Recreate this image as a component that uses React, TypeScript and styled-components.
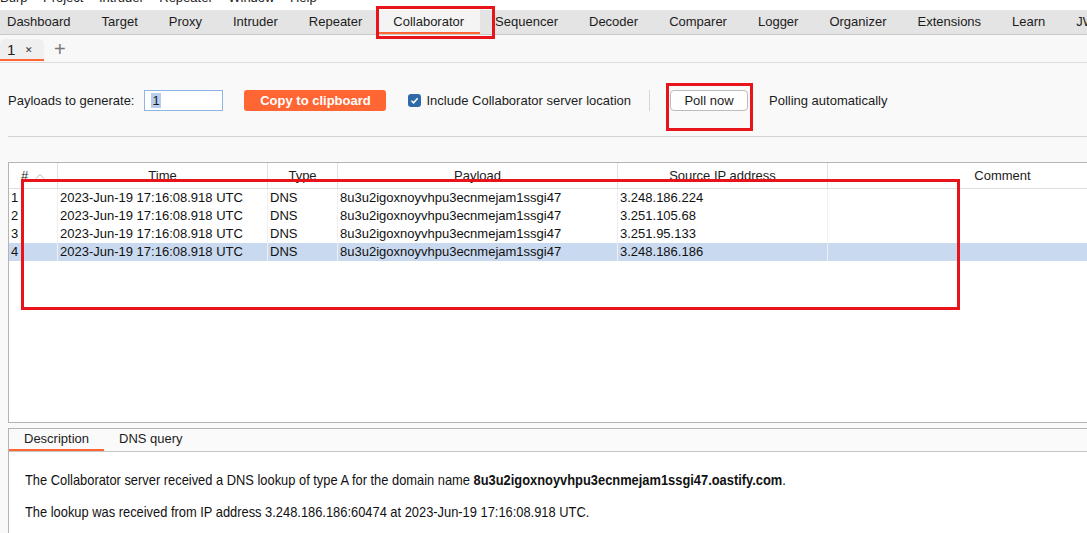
import React from 'react';
import styled, { createGlobalStyle } from 'styled-components';

const GlobalStyle = createGlobalStyle`
  html, body { margin: 0; padding: 0; }
  body {
    background: #f9f9f9;
    font-family: "Liberation Sans", Arial, sans-serif;
    font-size: 13px;
    color: #1c1c1c;
    overflow: hidden;
  }
`;

const Page = styled.div`
  position: relative;
  width: 1087px;
  height: 533px;
  overflow: hidden;
  display: flex;
  flex-direction: column;
  background: #f9f9f9;
`;

const MenuBar = styled.div`
  flex: none;
  height: 10px;
  overflow: hidden;
  background: #fff;
`;

const MenuInner = styled.div`
  display: flex;
  margin-top: -10px;
  height: 16px;
  line-height: 16px;
  color: #222;
`;

const MenuItem = styled.span`
  margin-right: 15.5px;
`;

const MainTabs = styled.div`
  flex: none;
  display: flex;
  height: 24px;
  background: #e4e4e4;
  border-bottom: 1px solid #c9c9c9;
  white-space: nowrap;
  overflow: hidden;
`;

const MainTab = styled.div<{ $active?: boolean }>`
  flex: none;
  height: 24px;
  box-sizing: border-box;
  padding: 1px 15.5px 0;
  line-height: 22px;
  color: #1c1c1c;
  background: ${p => (p.$active ? '#f4f4f4' : 'transparent')};
  border-bottom: 2px solid ${p => (p.$active ? '#ff6633' : 'transparent')};
  &:first-child { padding-left: 7px; }
`;

const SubTabs = styled.div`
  flex: none;
  display: flex;
  align-items: flex-end;
  height: 28px;
  box-sizing: border-box;
  padding-bottom: 1px;
  border-bottom: 1px solid #dcdcdc;
  background: #f8f8f8;
`;

const SubTab = styled.div`
  display: flex;
  align-items: center;
  height: 22px;
  box-sizing: border-box;
  width: 44px;
  padding-left: 7px;
  background: #efefef;
  border-radius: 5px 5px 0 0;
  border-bottom: 2px solid #ff6633;
`;

const SubTabNum = styled.span`
  font-size: 15px;
  color: #222;
`;

const SubTabClose = styled.span`
  font-size: 9px;
  margin-left: 10px;
  margin-top: 2px;
  color: #333;
`;

const AddTab = styled.span`
  font-size: 20px;
  font-weight: 300;
  color: #777;
  margin-left: 10px;
  align-self: center;
  line-height: 20px;
  margin-top: 2px;
`;

const Controls = styled.div`
  flex: none;
  display: flex;
  align-items: center;
  height: 73px;
  padding-left: 8px;
  padding-top: 1px;
  box-sizing: border-box;
`;

const Label = styled.span`
  color: #1c1c1c;
  white-space: nowrap;
`;

const NumInput = styled.div`
  width: 79px;
  height: 21px;
  box-sizing: border-box;
  margin-left: 10px;
  border: 1px solid #8fb4e2;
  background: #fff;
  display: flex;
  align-items: center;
  padding-left: 6px;
`;

const Selected = styled.span`
  background: #b7cdeb;
  padding: 0 1px;
  line-height: 15px;
  font-size: 13px;
`;

const OrangeButton = styled.div`
  margin-left: 21px;
  width: 142px;
  height: 21px;
  border-radius: 3px;
  background: #ff6633;
  color: #fff;
  font-weight: bold;
  display: flex;
  align-items: center;
  justify-content: center;
`;

const CheckLabel = styled.label`
  margin-left: 22px;
  display: flex;
  align-items: center;
  gap: 5px;
`;

const Box = styled.span`
  width: 13px;
  height: 13px;
  border-radius: 3px;
  background: #2f6aa8;
  display: flex;
  align-items: center;
  justify-content: center;
`;

const Separator = styled.span`
  width: 1px;
  height: 21px;
  background: #d6d6d6;
  margin-left: 18px;
`;

const PlainButton = styled.div`
  margin-left: 20px;
  width: 78px;
  height: 21px;
  box-sizing: border-box;
  border: 1px solid #bcbcbc;
  border-radius: 4px;
  background: #fff;
  display: flex;
  align-items: center;
  justify-content: center;
`;

const Status = styled.span`
  margin-left: 21px;
`;

const Divider = styled.div`
  flex: none;
  margin-left: 8px;
  border-top: 1px solid #d4d4d4;
  height: 25px;
`;

const TablePanel = styled.div`
  flex: none;
  margin-left: 8px;
  height: 261px;
  box-sizing: border-box;
  border-left: 1px solid #b4b4b4;
  border-top: 1px solid #b4b4b4;
  border-bottom: 1px solid #b4b4b4;
  background: #fff;
  overflow: hidden;
`;

const Grid = styled.div`
  display: grid;
  grid-template-columns: 48px 210px 70px 280px 210px 350px;
  width: 1168px;
`;

const HeadCell = styled.div<{ $first?: boolean }>`
  height: 24px;
  border-bottom: 1px solid #dedede;
  border-left: ${p => (p.$first ? 'none' : '1px solid #e2e2e2')};
  display: flex;
  align-items: center;
  justify-content: center;
  line-height: 24px;
  padding-top: 1px;
  box-sizing: content-box;
  color: #1c1c1c;
  gap: 7px;
`;

const Cell = styled.div<{ $first?: boolean; $sel?: boolean }>`
  height: 18px;
  line-height: 18px;
  padding-left: 2px;
  border-left: ${p => (p.$first ? 'none' : '1px solid #f0f0f0')};
  background: ${p => (p.$sel ? '#c9d9ef' : '#fff')};
  color: #111;
  white-space: nowrap;
  overflow: hidden;
`;

const Gap = styled.div`
  flex: none;
  height: 5px;
`;

const DescPanel = styled.div`
  flex: 1;
  margin-left: 8px;
  border-left: 1px solid #b4b4b4;
  border-top: 1px solid #b4b4b4;
  display: flex;
  flex-direction: column;
`;

const DescTabs = styled.div`
  flex: none;
  display: flex;
  height: 22px;
  background: #fafafa;
  border-bottom: 1px solid #c6c6c6;
`;

const DescTab = styled.div<{ $active?: boolean }>`
  padding: 0 15px;
  height: 22px;
  box-sizing: border-box;
  line-height: 20px;
  border-bottom: 2px solid ${p => (p.$active ? '#ff6633' : 'transparent')};
  color: #1c1c1c;
`;

const DescBody = styled.div`
  flex: 1;
  background: #fff;
  padding: 19px 0 0 16px;
  font-family: "Liberation Sans", Arial, sans-serif;
  font-size: 15px;
  color: #111;
`;

const Para = styled.p`
  margin: 0 0 15px 0;
  line-height: 17px;
  white-space: nowrap;
  transform: scaleX(0.858);
  transform-origin: left center;
`;

const Highlight = styled.div<{ $x: number; $y: number; $w: number; $h: number }>`
  position: absolute;
  left: ${p => p.$x}px;
  top: ${p => p.$y}px;
  width: ${p => p.$w}px;
  height: ${p => p.$h}px;
  box-sizing: border-box;
  border: 3px solid #e8141c;
  pointer-events: none;
`;

const menu = ['Burp', 'Project', 'Intruder', 'Repeater', 'Window', 'Help'];
const tabs = ['Dashboard', 'Target', 'Proxy', 'Intruder', 'Repeater', 'Collaborator', 'Sequencer', 'Decoder', 'Comparer', 'Logger', 'Organizer', 'Extensions', 'Learn', 'JWT Editor'];
const cols = ['Time', 'Type', 'Payload', 'Source IP address', 'Comment'];
const rows = [
  ['1', '2023-Jun-19 17:16:08.918 UTC', 'DNS', '8u3u2igoxnoyvhpu3ecnmejam1ssgi47', '3.248.186.224', ''],
  ['2', '2023-Jun-19 17:16:08.918 UTC', 'DNS', '8u3u2igoxnoyvhpu3ecnmejam1ssgi47', '3.251.105.68', ''],
  ['3', '2023-Jun-19 17:16:08.918 UTC', 'DNS', '8u3u2igoxnoyvhpu3ecnmejam1ssgi47', '3.251.95.133', ''],
  ['4', '2023-Jun-19 17:16:08.918 UTC', 'DNS', '8u3u2igoxnoyvhpu3ecnmejam1ssgi47', '3.248.186.186', ''],
];

export default function App() {
  return (
    <Page>
      <GlobalStyle />
      <MenuBar>
        <MenuInner>
          {menu.map(m => <MenuItem key={m}>{m}</MenuItem>)}
        </MenuInner>
      </MenuBar>
      <MainTabs>
        {tabs.map(t => <MainTab key={t} $active={t === 'Collaborator'}>{t}</MainTab>)}
      </MainTabs>
      <SubTabs>
        <SubTab>
          <SubTabNum>1</SubTabNum>
          <SubTabClose>✕</SubTabClose>
        </SubTab>
        <AddTab>+</AddTab>
      </SubTabs>
      <Controls>
        <Label>Payloads to generate:</Label>
        <NumInput><Selected>1</Selected></NumInput>
        <OrangeButton>Copy to clipboard</OrangeButton>
        <CheckLabel>
          <Box>
            <svg width="9" height="9" viewBox="0 0 9 9">
              <path d="M1.5 4.8 L3.6 6.8 L7.6 2.2" fill="none" stroke="#fff" strokeWidth="1.5" />
            </svg>
          </Box>
          <Label>Include Collaborator server location</Label>
        </CheckLabel>
        <Separator />
        <PlainButton>Poll now</PlainButton>
        <Status>Polling automatically</Status>
      </Controls>
      <Divider />
      <TablePanel>
        <Grid>
          <HeadCell $first>
            <span>#</span>
            <svg width="10" height="6" viewBox="0 0 10 6">
              <path d="M1 5.5 L5 1.5 L9 5.5" fill="none" stroke="#b0b0b0" strokeWidth="1" />
            </svg>
          </HeadCell>
          {cols.map(c => <HeadCell key={c}>{c}</HeadCell>)}
          {rows.map(r =>
            r.map((v, i) => (
              <Cell key={r[0] + '-' + i} $first={i === 0} $sel={r[0] === '4'}>{v}</Cell>
            ))
          )}
        </Grid>
      </TablePanel>
      <Gap />
      <DescPanel>
        <DescTabs>
          <DescTab $active>Description</DescTab>
          <DescTab>DNS query</DescTab>
        </DescTabs>
        <DescBody>
          <Para>
            The Collaborator server received a DNS lookup of type A for the domain name <b>8u3u2igoxnoyvhpu3ecnmejam1ssgi47.oastify.com</b>.
          </Para>
          <Para>
            The lookup was received from IP address 3.248.186.186:60474 at 2023-Jun-19 17:16:08.918 UTC.
          </Para>
        </DescBody>
      </DescPanel>
      <Highlight $x={376} $y={6} $w={119} $h={33} />
      <Highlight $x={666} $y={83} $w={87} $h={48} />
      <Highlight $x={21} $y={179} $w={939} $h={131} />
    </Page>
  );
}
